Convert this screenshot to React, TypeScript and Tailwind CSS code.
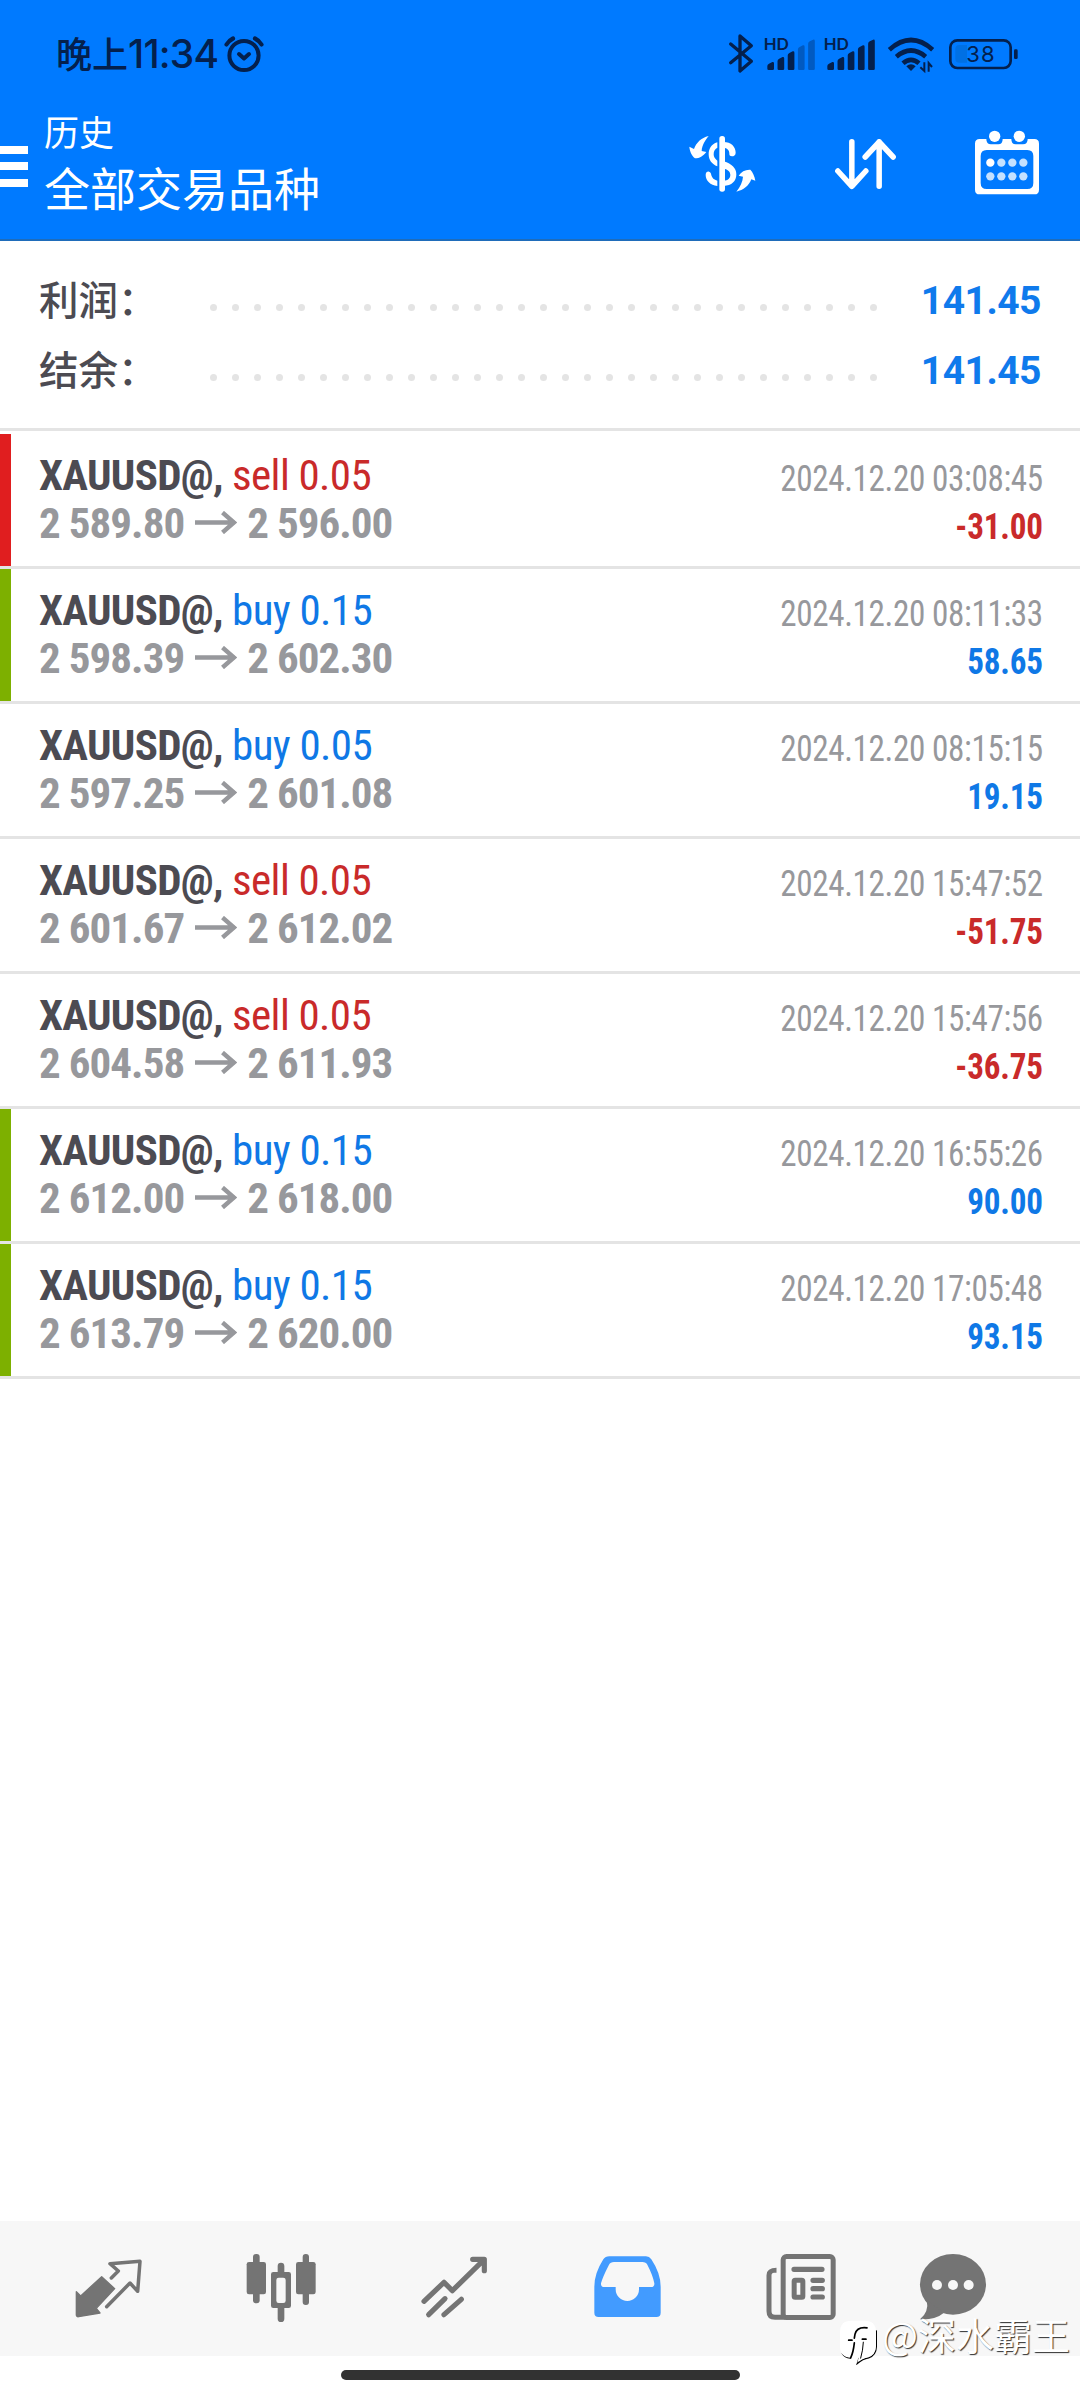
import type { ReactNode } from "react";
import clsx from "clsx";

type Deal = {
  side: "buy" | "sell";
  volume: string;
  open: string;
  close: string;
  time: string;
  profit: string;
  mark?: "tp" | "sl";
};

const SYMBOL = "XAUUSD@";

const DEALS: Deal[] = [
  { side: "sell", volume: "0.05", open: "2 589.80", close: "2 596.00", time: "2024.12.20 03:08:45", profit: "-31.00", mark: "sl" },
  { side: "buy", volume: "0.15", open: "2 598.39", close: "2 602.30", time: "2024.12.20 08:11:33", profit: "58.65", mark: "tp" },
  { side: "buy", volume: "0.05", open: "2 597.25", close: "2 601.08", time: "2024.12.20 08:15:15", profit: "19.15" },
  { side: "sell", volume: "0.05", open: "2 601.67", close: "2 612.02", time: "2024.12.20 15:47:52", profit: "-51.75" },
  { side: "sell", volume: "0.05", open: "2 604.58", close: "2 611.93", time: "2024.12.20 15:47:56", profit: "-36.75" },
  { side: "buy", volume: "0.15", open: "2 612.00", close: "2 618.00", time: "2024.12.20 16:55:26", profit: "90.00", mark: "tp" },
  { side: "buy", volume: "0.15", open: "2 613.79", close: "2 620.00", time: "2024.12.20 17:05:48", profit: "93.15", mark: "tp" },
];

const SUMMARY = [
  { label: "利润：", value: "141.45" },
  { label: "结余：", value: "141.45" },
];

/* ---------- status bar ---------- */

function AlarmIcon() {
  return (
    <svg viewBox="0 0 42 38" className="h-[38px] w-[42px]" fill="none" stroke="currentColor" strokeLinecap="round" strokeLinejoin="round">
      <circle cx="21" cy="20.5" r="14.6" strokeWidth="4" />
      <path d="M16 19l5 4.5 5-4.5" strokeWidth="4" />
      <path d="M3.5 9.5Q6 5.5 10 3.5M38.5 9.5Q36 5.5 32 3.5" strokeWidth="4.2" />
    </svg>
  );
}

function SignalIcon({ level }: { level: number }) {
  const tops = [112, 97, 80, 62, 45];
  return (
    <svg viewBox="120 0 180 180" className="h-[60px] w-[60px]" fill="currentColor">
      <text x="131" y="75" className="font-['Inter'] text-[49px] font-semibold" textLength="76" lengthAdjust="spacingAndGlyphs">
        HD
      </text>
      {tops.map((top, i) => {
        const x = 142 + i * 30.6;
        return (
          <path
            key={top}
            opacity={i < level ? 1 : 0.35}
            d={`M${x} ${top + 11}Q${x} ${top + 6} ${x + 5} ${top + 4}L${x + 15} ${top - 1}Q${x + 20} ${top - 2} ${x + 20} ${top + 3}V131Q${x + 20} 135 ${x + 16} 135H${x + 4}Q${x} 135 ${x} 131Z`}
          />
        );
      })}
    </svg>
  );
}

function StatusBar() {
  return (
    <div className="flex h-[98px] items-start justify-between text-[#04204d]">
      <div className="flex pl-14 pt-[35px]">
        <span className="w-[167px] whitespace-nowrap font-['Inter','Noto_Sans_CJK_SC',sans-serif] text-[39px] font-medium leading-[38px] tracking-[-0.8px]">
          <span className="text-[36px] tracking-normal">晚上</span>11:34
        </span>
        <AlarmIcon />
      </div>
      <div className="flex pr-[50px] pt-[25px]">
        <svg viewBox="0 0 120 180" className="h-[60px] w-10" fill="none" stroke="currentColor" strokeWidth="10" strokeLinecap="round" strokeLinejoin="round">
          <path d="M32 57L94 109L60 138V33L94 62L32 113" />
        </svg>
        <SignalIcon level={3} />
        <SignalIcon level={5} />
        <svg viewBox="480 0 180 180" className="h-[60px] w-[60px]" fill="none" stroke="currentColor" strokeWidth="14">
          <path d="M508 74Q573 16 638 74M529 95Q573 58 617 95M549 115Q573 94 597 115" />
          <path d="M559 124Q573 111 587 124L573 138Z" fill="currentColor" stroke="none" />
          <path d="M613 112V138L601 127M626 140V114L636 126" strokeWidth="6" />
        </svg>
        <svg viewBox="660 0 270 180" className="h-[60px] w-[90px]" fill="none">
          <path d="M718 60H741V113H718Q706 113 706 101V72Q706 60 718 60Z" fill="#0070e4" />
          <rect x="691" y="46" width="181" height="83" rx="21" stroke="currentColor" strokeWidth="8" />
          <rect x="882" y="73" width="11" height="29" rx="4" fill="currentColor" />
          <text x="739" y="112" fill="currentColor" className="font-['Inter'] text-[66px]" textLength="85">
            38
          </text>
        </svg>
      </div>
    </div>
  );
}

/* ---------- header ---------- */

function CurrencyIcon() {
  return (
    <svg viewBox="50 30 216 195" className="h-[65px] w-[72px]" fill="currentColor">
      <rect x="147" y="48" width="17" height="167" rx="8" />
      <path d="M141 67C122 72 115 88 115 103C115 120 125 133 141 139V122C133 116 130 110 130 103C130 94 133 88 141 83Z" />
      <path d="M160 66C182 66 196 80 196 98C196 106 190 109 185 109C179 109 176 105 177 99C177 90 170 84 160 83Z" />
      <path d="M160 124C185 132 198 145 198 163C198 184 184 197 160 198V182C173 182 180 174 180 165C180 155 173 148 160 146Z" />
      <path d="M141 198C120 196 106 182 106 165C106 157 111 154 116 155C121 156 122 160 123 166C125 174 131 180 141 182Z" />
      <path d="M115 48C105 60 95 75 94 93L108 96C98 108 88 115 74 115C66 108 59 98 57 80L71 87C78 68 92 54 115 48Z" />
      <path d="M198 215C210 200 217 185 218 170L205 167C213 155 225 148 240 149C247 156 253 168 255 182L243 178C235 198 220 210 198 215Z" />
    </svg>
  );
}

function SortIcon() {
  return (
    <svg viewBox="485 30 200 195" className="h-[65px] w-[67px]" fill="none" stroke="currentColor" strokeWidth="16.5" strokeLinecap="round" strokeLinejoin="round">
      <path d="M544 65V198M502 153L544 199L586 153M626 199V65M584 111L626 66L668 111" />
    </svg>
  );
}

function CalendarIcon() {
  return (
    <svg viewBox="905 30 210 195" className="h-[65px] w-[70px]">
      <path
        fill="currentColor"
        fillRule="evenodd"
        d="M928 57H948Q948 73 962 73H984Q997 73 997 57H1023Q1023 73 1036 73H1058Q1072 73 1072 57H1092Q1106 57 1106 71V209Q1106 223 1092 223H928Q914 223 914 209V71Q914 57 928 57ZM949 90Q931 90 931 108V189Q931 207 949 207H1071Q1089 207 1089 189V108Q1089 90 1071 90Z"
      />
      <circle cx="973" cy="49" r="17" fill="currentColor" />
      <circle cx="1047" cy="49" r="17" fill="currentColor" />
      {[128, 169].map((cy, row) =>
        [960, 993, 1026, 1059].map((cx, col) => (
          <circle key={`${cx}-${cy}`} cx={cx} cy={cy} r="12.5" fill={row + col === 0 ? "#fff" : "#c4e1ff"} />
        ))
      )}
    </svg>
  );
}

function Header() {
  return (
    <header className="h-[241px] border-b-2 border-[#1f6cba] bg-[#007aff]">
      <StatusBar />
      <div className="flex text-white">
        <div className="flex w-7 flex-col gap-[8.5px] pt-[47.5px]">
          <span className="h-2 bg-white" />
          <span className="h-2 bg-white" />
          <span className="h-2 bg-white" />
        </div>
        <div className="ml-4 grow pt-2 font-['Noto_Sans_CJK_SC',sans-serif]">
          <div className="text-[35px] leading-[50px]">历史</div>
          <div className="mt-0.5 text-[46px] leading-[56px]">全部交易品种</div>
        </div>
        <div className="flex gap-[73px] pr-[38px] pt-8">
          <CurrencyIcon />
          <SortIcon />
          <CalendarIcon />
        </div>
      </div>
    </header>
  );
}

/* ---------- history ---------- */

function SummaryRow({ label, value }: { label: string; value: string }) {
  return (
    <div className="flex h-[70px] items-start justify-between pl-[39px] pr-[39px]">
      <span className="w-[170px] font-['Noto_Sans_CJK_SC',sans-serif] text-[39.5px] font-medium leading-[63px] text-[#4c4b52]">
        {label}
      </span>
      <div className="flex grow gap-[15px] pl-px pt-[38px]">
        {Array.from({ length: 31 }, (_, i) => (
          <span key={i} className="size-[7px] shrink-0 rounded-full bg-[#e4e4e4]" />
        ))}
      </div>
      <span className="font-['Roboto',sans-serif] text-[39px] font-bold leading-[70px] tracking-[-0.5px] text-[#0f7aec]">
        {value}
      </span>
    </div>
  );
}

function DealRow({ deal }: { deal: Deal }) {
  const loss = deal.profit.startsWith("-");
  return (
    <div className="flex h-[135px] border-b-[3px] border-[#e4e4e4] font-['Roboto_Condensed',sans-serif] leading-[48px]">
      <span className={clsx("w-[11px]", deal.mark === "sl" && "bg-[#e01e1f]", deal.mark === "tp" && "bg-[#7db000]")} />
      <div className="grow pl-7 pt-[17px] text-[43px]">
        <div className="whitespace-pre">
          <span className="font-bold tracking-[-0.7px] text-[#4c4b52]">{SYMBOL}, </span>
          <span className={clsx("tracking-[-0.6px]", deal.side === "buy" ? "text-[#0f78e6]" : "text-[#c92a2a]")}>
            {deal.side} {deal.volume}
          </span>
        </div>
        <div className="flex font-bold tracking-[-0.95px] text-[#97989c]">
          <span>{deal.open}</span>
          <svg viewBox="0 0 42 23" className="ml-[11px] mr-2.5 mt-3 h-[23px] w-[42px]" fill="none" stroke="currentColor" strokeWidth="4.4">
            <path d="M0 11.5H40M27.5 1.5L39 11.5L27.5 21.5" />
          </svg>
          <span>{deal.close}</span>
        </div>
      </div>
      <div className="origin-right scale-x-[0.895] pr-[42px] pt-[21px] text-right text-[37px]">
        <div className="tracking-[-0.4px] text-[#97989c]">{deal.time}</div>
        <div className={clsx("font-bold tracking-[-0.2px]", loss ? "text-[#c92a2a]" : "text-[#0f78e6]")}>{deal.profit}</div>
      </div>
    </div>
  );
}

/* ---------- bottom navigation ---------- */

function NavItem({ viewBox, active, children }: { viewBox: string; active?: boolean; children: ReactNode }) {
  return (
    <button className={clsx("h-[135px] w-[173px]", active ? "text-[#429bff]" : "text-[#747474]")}>
      <svg viewBox={viewBox} className="h-[135px] w-[173px]" fill="none" stroke="currentColor" strokeLinecap="round" strokeLinejoin="round">
        {children}
      </svg>
    </button>
  );
}

function BottomNav() {
  return (
    <nav className="flex h-[135px] bg-[#f7f7f7] pl-[22px]">
      <NavItem viewBox="66 63 519 405">
        <path d="M305 230L344 266L289 325L300 339L236 350Q229 351 229 344V275L242 288Z" fill="currentColor" strokeWidth="4" />
        <path d="M334 234L355 213L330 191L420 184L413 274L390 249L320 320" strokeWidth="10.5" />
      </NavItem>
      <NavItem viewBox="585 63 519 405">
        <g fill="currentColor" stroke="none">
          <rect x="740" y="186" width="58" height="97" rx="7" />
          <rect x="759" y="162" width="20" height="148" rx="9" />
          <rect x="888" y="186" width="59" height="97" rx="7" />
          <rect x="908" y="162" width="19" height="153" rx="9" />
          <path d="M843 188Q853 188 853 198V216H866Q873 216 873 223V317Q873 324 866 324H853V356Q853 366 843 366Q833 366 833 356V324H820Q813 324 813 317V223Q813 216 820 216H833V198Q833 188 843 188Z" />
        </g>
        <rect x="829" y="233" width="28" height="76" rx="7" fill="#f7f7f7" stroke="none" />
      </NavItem>
      <NavItem viewBox="24 63 519 405">
        <path d="M192 304L252 247L277 272L370 181M338 178H373V212" strokeWidth="15.5" />
        <path d="M206 344L255 296M252 344L304 298" strokeWidth="15.5" />
      </NavItem>
      <NavItem viewBox="543 63 519 405" active>
        <path
          fill="currentColor"
          stroke="none"
          fillRule="evenodd"
          d="M748 169H858Q868 169 874 178Q902 220 902 260V338Q902 351 889 351H716Q703 351 703 338V260Q703 220 730 178Q736 169 748 169ZM762 186Q751 186 747 194Q727 233 723 250Q722 261 733 261H767V268A35 35 0 0 0 837 268V261H873Q884 261 883 250Q879 227 862 194Q858 186 847 186Z"
        />
      </NavItem>
      <NavItem viewBox="-18 63 519 405">
        <rect x="189.5" y="169.5" width="150" height="183" rx="10" strokeWidth="15" />
        <path d="M162 211Q147 211 147 226V334Q147 352 165 352H190" strokeWidth="15" strokeLinecap="square" />
        <path d="M222 208H306M279 241H307M279 266H307M279 291H307" strokeWidth="15.5" />
        <rect x="222.5" y="241" width="26" height="51" rx="3" strokeWidth="15" />
      </NavItem>
      <NavItem viewBox="501 63 519 405">
        <ellipse cx="699" cy="253" rx="99" ry="91" fill="currentColor" stroke="none" />
        <path d="M620 300Q628 335 600 358Q646 360 672 338Z" fill="currentColor" stroke="none" />
        <g fill="#f7f7f7" stroke="none">
          <circle cx="651" cy="255" r="15" />
          <circle cx="699" cy="255" r="15" />
          <circle cx="746" cy="255" r="15" />
        </g>
      </NavItem>
    </nav>
  );
}

function Watermark() {
  return (
    <div className="absolute left-[838px] top-[2318px] flex items-start text-white">
      <svg viewBox="354 354 126 140" className="h-[47px] w-[42px]" fill="none" strokeLinecap="round">
        <path d="M391 474Q374 472 367 460M469 392V440Q468 466 446 473Q428 476 412 490L417 474" stroke="#000" strokeWidth="4" />
        <path d="M394 362H434Q468 362 468 396V438Q468 466 440 472Q424 475 412 488L416 472H394Q360 472 360 438V396Q360 362 394 362Z" fill="#fff" />
        <path d="M441 383Q411 379 405 402Q404 408 403 414M386 420H396M427 417H438M403 428Q400 456 392 473" stroke="#000" strokeWidth="5" />
        <path d="M430 426Q429 450 422 474" stroke="#000" strokeWidth="3" />
      </svg>
      <span className="-mt-1.5 ml-0.5 font-['Noto_Sans_CJK_SC',sans-serif] text-[38px] leading-[44px] [text-shadow:1px_1px_1px_rgba(0,0,0,0.8)]">
        @深水霸王
      </span>
    </div>
  );
}

export default function App() {
  return (
    <div className="relative flex h-[2400px] w-[1080px] flex-col overflow-hidden bg-white">
      <Header />
      <section className="h-[187px] pt-[25px]">
        {SUMMARY.map((row) => (
          <SummaryRow key={row.label} {...row} />
        ))}
      </section>
      <main className="grow border-t-[3px] border-[#e4e4e4] pt-[3px]">
        {DEALS.map((deal) => (
          <DealRow key={deal.time} deal={deal} />
        ))}
      </main>
      <BottomNav />
      <div className="flex h-11 justify-center pt-3.5">
        <div className="h-2.5 w-[399px] rounded-full bg-[#323232]" />
      </div>
      <Watermark />
    </div>
  );
}
